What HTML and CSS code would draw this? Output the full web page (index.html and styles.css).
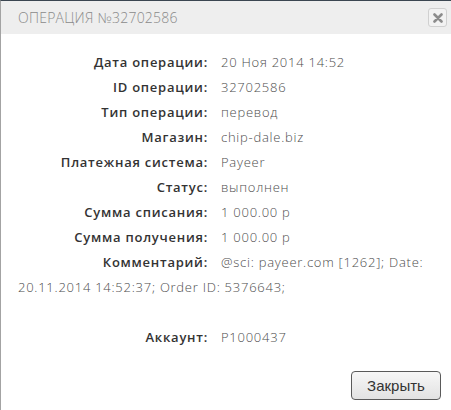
FILE: index.html
```html
<!DOCTYPE html>
<html lang="ru">
<head>
<meta charset="utf-8">
<title>Операция</title>
<link rel="stylesheet" href="styles.css">
</head>
<body>
<div class="dialog">
  <div class="dialog-head">
    <span class="dialog-title">Операция №32702586</span>
    <button class="dialog-x" type="button" aria-label="Закрыть">
      <svg width="10" height="10" viewBox="0 0 10 10"><path d="M1.5 1.5 L8.5 8.5 M8.5 1.5 L1.5 8.5" stroke="#8c8c8c" stroke-width="2.6" stroke-linecap="round"/></svg>
    </button>
  </div>
  <div class="dialog-body">
    <div class="row"><span class="lbl">Дата операции:</span><span class="val">20 Ноя 2014 14:52</span></div>
    <div class="row"><span class="lbl">ID операции:</span><span class="val">32702586</span></div>
    <div class="row"><span class="lbl">Тип операции:</span><span class="val">перевод</span></div>
    <div class="row"><span class="lbl">Магазин:</span><span class="val">chip-dale.biz</span></div>
    <div class="row"><span class="lbl">Платежная система:</span><span class="val">Payeer</span></div>
    <div class="row"><span class="lbl">Статус:</span><span class="val">выполнен</span></div>
    <div class="row"><span class="lbl">Сумма списания:</span><span class="val">1 000.00 р</span></div>
    <div class="row"><span class="lbl">Сумма получения:</span><span class="val">1 000.00 р</span></div>
    <div class="row"><span class="lbl">Комментарий:</span><span class="val">@sci: payeer.com [1262]; Date: 20.11.2014 14:52:37; Order ID: 5376643;</span></div>
    <div class="row row-empty"></div>
    <div class="row"><span class="lbl">Аккаунт:</span><span class="val">P1000437</span></div>
  </div>
  <div class="dialog-foot">
    <button class="btn" type="button">Закрыть</button>
  </div>
</div>
</body>
</html>
```
FILE: styles.css
```css
html, body {
  margin: 0;
  padding: 0;
  background: #fff;
}
.dialog {
  width: 451px;
  height: 410px;
  box-sizing: border-box;
  border-top: 1px solid #3b4651;
  border-left: 1px solid #a3a3a3;
  display: flex;
  flex-direction: column;
  font-family: "Open Sans", sans-serif;
}
.dialog-head {
  height: 33px;
  background: #eeeeee;
  display: flex;
  align-items: center;
  justify-content: space-between;
  padding: 0 4px 0 17px;
}
.dialog-title {
  text-transform: uppercase;
  font-size: 14px;
  font-weight: 300;
  letter-spacing: 0.25px;
  color: #8a8a8a;
}
.dialog-x {
  width: 19px;
  height: 19px;
  padding: 0;
  border: 1px solid #d0d0d0;
  border-radius: 3px;
  background: #f2f2f2;
  display: flex;
  align-items: center;
  justify-content: center;
}
.dialog-body {
  padding: 16px 8px 0 17px;
  flex: 1;
}
.row {
  line-height: 25px;
  font-size: 13px;
  letter-spacing: 0.75px;
}
.row-empty {
  height: 25px;
}
.lbl {
  display: inline-block;
  width: 190px;
  text-align: right;
  margin-right: 13px;
  font-weight: 600;
  color: #333;
}
.val {
  font-weight: 300;
  color: #4d4d4d;
}
.dialog-foot {
  display: flex;
  justify-content: flex-end;
  padding: 0 10px 10px 0;
}
.btn {
  width: 90px;
  height: 29px;
  border: 1px solid #5a5a5a;
  border-radius: 4px;
  background: linear-gradient(#f7f7f7, #e2e2e2);
  font-family: "Liberation Sans", Arial, sans-serif;
  font-size: 15px;
  color: #333;
  padding: 0;
}
```
